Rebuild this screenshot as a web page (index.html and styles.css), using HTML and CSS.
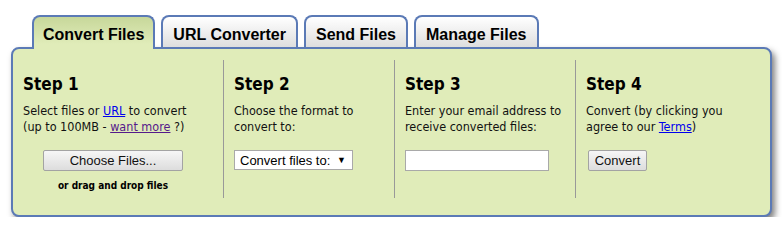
FILE: index.html
```html
<!DOCTYPE html>
<html>
<head>
<meta charset="utf-8">
<link rel="stylesheet" href="styles.css">
</head>
<body>
<div class="wrap">
  <div class="tabs">
    <div class="tab active">Convert Files</div>
    <div class="tab">URL Converter</div>
    <div class="tab">Send Files</div>
    <div class="tab">Manage Files</div>
  </div>
  <div class="panel">
    <div class="step s1">
      <h2>Step 1</h2>
      <p>Select files or <a class="link" href="#">URL</a> to convert<br>(up to 100MB - <a class="visited" href="#">want more</a> ?)</p>
      <div class="center">
        <button class="btn choose">Choose Files...</button>
        <div class="drag">or drag and drop files</div>
      </div>
    </div>
    <div class="step">
      <h2>Step 2</h2>
      <p>Choose the format to<br>convert to:</p>
      <div class="select"><span>Convert files to:</span><span class="arrow">&#9660;</span></div>
    </div>
    <div class="step">
      <h2>Step 3</h2>
      <p>Enter your email address to<br>receive converted files:</p>
      <input class="email" type="text">
    </div>
    <div class="step">
      <h2>Step 4</h2>
      <p>Convert (by clicking you<br>agree to our <a class="link" href="#">Terms</a>)</p>
      <button class="btn convert">Convert</button>
    </div>
  </div>
</div>
</body>
</html>
```
FILE: styles.css
```css
html, body {
  margin: 0;
  padding: 0;
  background: #ffffff;
}
.wrap {
  padding: 15px 0 0 11px;
  width: 761px;
}
.tabs {
  display: flex;
  gap: 6px;
  padding-left: 21px;
  position: relative;
  z-index: 2;
  height: 32px;
}
.tab {
  box-sizing: border-box;
  height: 32px;
  padding: 8px 10px 0;
  border: 2px solid #5b7ab6;
  border-bottom: none;
  border-radius: 8px 8px 0 0;
  font-family: "Liberation Sans", Arial, sans-serif;
  font-weight: bold;
  font-size: 16px;
  line-height: 20px;
  color: #000;
  white-space: nowrap;
  background: linear-gradient(#ffffff, #dedede);
}
.tab.active {
  height: 34px;
  background: linear-gradient(#c7d79a, #e0ecb9 85%);
  padding-left: 9px;
  padding-right: 9px;
}
.panel {
  box-sizing: border-box;
  height: 170px;
  border: 2px solid #5b7ab6;
  border-radius: 8px;
  background: #e0ecb9;
  box-shadow: 3px 4px 6px rgba(0, 0, 0, 0.5);
  padding: 11px 0 17px;
  display: grid;
  grid-template-columns: 210px 171px 181px 1fr;
  font-family: "DejaVu Sans Condensed", "DejaVu Sans", sans-serif;
  color: #111;
}
.step {
  border-left: 1px solid #999999;
  padding: 14px 0 0 10px;
}
.step.s1 {
  border-left: none;
}
h2 {
  margin: 0 0 9px;
  font-size: 17px;
  line-height: 20px;
  font-weight: bold;
  color: #000;
}
p {
  margin: 0 0 15px;
  font-size: 12.5px;
  line-height: 16px;
}
.link {
  color: #0000ee;
}
.visited {
  color: #551a8b;
}
.center {
  width: 180px;
  display: flex;
  flex-direction: column;
  align-items: center;
}
.btn {
  box-sizing: border-box;
  height: 21px;
  border: 1px solid #a3a3a3;
  border-radius: 2px;
  background: linear-gradient(#f6f6f6, #dddddd);
  font-family: "Liberation Sans", Arial, sans-serif;
  font-size: 13px;
  color: #111;
  padding: 0;
}
.choose {
  width: 140px;
}
.convert {
  width: 59px;
  margin-left: 2px;
}
.drag {
  margin-top: 9px;
  font-size: 10px;
  line-height: 12px;
  font-weight: bold;
  color: #000;
}
.select {
  box-sizing: border-box;
  width: 119px;
  height: 20px;
  border: 1px solid #a9a9a9;
  background: #fff;
  display: flex;
  justify-content: space-between;
  align-items: center;
  padding: 0 6px 0 5px;
  font-family: "Liberation Sans", Arial, sans-serif;
  font-size: 13px;
  white-space: nowrap;
  color: #000;
}
.arrow {
  font-size: 9px;
}
.email {
  box-sizing: border-box;
  width: 144px;
  height: 21px;
  border: 1px solid #a9a9a9;
  background: #fff;
  margin: 0;
  padding: 0;
  display: block;
}
```
